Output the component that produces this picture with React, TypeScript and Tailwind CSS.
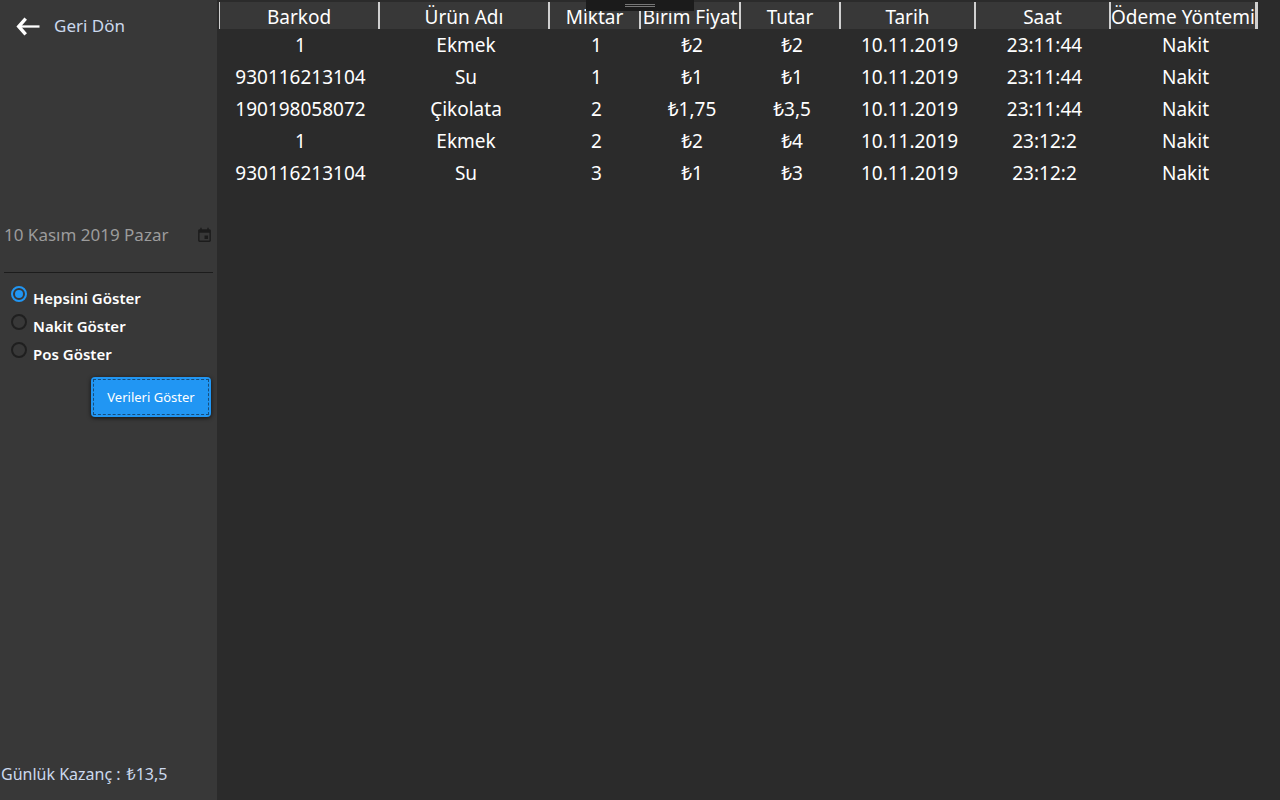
import { useState } from "react";

const columns = [
  { title: "Barkod", cls: "w-[161px] border-l" },
  { title: "Ürün Adı", cls: "w-[170px]" },
  { title: "Miktar", cls: "w-[91px]" },
  { title: "Birim Fiyat", cls: "w-[100px]" },
  { title: "Tutar", cls: "w-[100px]" },
  { title: "Tarih", cls: "w-[135px]" },
  { title: "Saat", cls: "w-[135px]" },
  { title: "Ödeme Yöntemi", cls: "w-[147px] border-r-3" },
];

const rows = [
  ["1", "Ekmek", "1", "₺2", "₺2", "10.11.2019", "23:11:44", "Nakit"],
  ["930116213104", "Su", "1", "₺1", "₺1", "10.11.2019", "23:11:44", "Nakit"],
  ["190198058072", "Çikolata", "2", "₺1,75", "₺3,5", "10.11.2019", "23:11:44", "Nakit"],
  ["1", "Ekmek", "2", "₺2", "₺4", "10.11.2019", "23:12:2", "Nakit"],
  ["930116213104", "Su", "3", "₺1", "₺3", "10.11.2019", "23:12:2", "Nakit"],
];

const filters = ["Hepsini Göster", "Nakit Göster", "Pos Göster"];

function BackIcon() {
  return (
    <svg width="24" height="20" viewBox="0 0 24 20" fill="none" stroke="#fff" aria-hidden="true">
      <path d="M3 10.500H23.500" strokeWidth="2.3" />
      <path d="M9.700 2.700L2.700 10.500l7 7.800" strokeWidth="3.4" />
    </svg>
  );
}

function CalendarIcon() {
  return (
    <svg width="17" height="17" viewBox="0 0 24 24" fill="#1c1c1c" aria-hidden="true">
      <path d="M17 12h-5v5h5v-5zM16 1v2H8V1H6v2H5c-1.110 0-1.990.9-1.990 2L3 19c0 1.100.89 2 2 2h14c1.100 0 2-.9 2-2V5c0-1.100-.9-2-2-2h-1V1h-2zm3 18H5V8h14v11z" />
    </svg>
  );
}

function Sidebar() {
  const [selected, setSelected] = useState(filters[0]);
  return (
    <aside className="flex w-[217px] shrink-0 flex-col bg-[#383838]">
      <button type="button" className="flex h-13 items-center gap-3.5 pl-4 text-[17px] text-[#ccd9ee]">
        <BackIcon />
        Geri Dön
      </button>

      <div className="mx-1 mt-[162px] flex h-[59px] items-start justify-between border-b border-[#1c1c1c] pt-[9px]">
        <input
          type="text"
          readOnly
          aria-label="Tarih"
          defaultValue="10 Kasım 2019 Pazar"
          className="h-6 w-44 bg-transparent text-[17px] text-[#9c9c9c] outline-none"
        />
        <button type="button" aria-label="Takvimi aç" className="flex h-6 items-center">
          <CalendarIcon />
        </button>
      </div>

      <fieldset className="mt-[11px] flex flex-col pl-[11px]">
        {filters.map((name) => (
          <label key={name} className="flex h-7 gap-1.5 text-[15px] leading-7 font-semibold text-white">
            <input
              type="radio"
              name="filter"
              checked={selected === name}
              onChange={() => setSelected(name)}
              className="mt-0.5 flex size-4 appearance-none items-center justify-center rounded-full border-2 border-[#1f1f1f] before:size-2 before:rounded-full checked:border-[#2196f3] checked:before:bg-[#2196f3]"
            />
            {name}
          </label>
        ))}
      </fieldset>

      <button
        type="button"
        className="mt-[9px] mr-1.5 flex h-10 w-30 self-end rounded-sm bg-[#2196f3] p-0.5 text-[13px] text-white shadow-[0_1px_4px_rgba(0,0,0,0.7)]"
      >
        <span className="flex h-full w-full items-center justify-center border border-dashed border-[#174d7a] pt-0.5">
          Verileri Göster
        </span>
      </button>

      <p className="mt-auto flex gap-1.5 pb-3.5 pl-px text-[16px] leading-6 text-[#ccd9ee]">
        <span>Günlük Kazanç :</span>
        <span>₺13,5</span>
      </p>
    </aside>
  );
}

export default function App() {
  return (
    <div className="relative flex min-h-screen bg-[#2b2b2b] font-['Noto_Sans','Open_Sans',sans-serif]">
      <Sidebar />
      <main className="min-w-0 grow overflow-x-auto pt-0.5 pl-0.5">
        <table className="w-[1039px] table-fixed border-separate border-spacing-0 text-center text-[19px] text-white">
          <thead>
            <tr>
              {columns.map((c) => (
                <th
                  key={c.title}
                  scope="col"
                  className={`h-[27px] border-r-2 border-[#d0d0d0] bg-[#383838] p-0 pt-0.5 leading-6 font-normal whitespace-nowrap ${c.cls}`}
                >
                  {c.title}
                </th>
              ))}
            </tr>
          </thead>
          <tbody>
            {rows.map((row, i) => (
              <tr key={i}>
                {row.map((cell, j) => (
                  <td key={j} className="h-8 p-0 pl-0.5 leading-8">
                    {cell}
                  </td>
                ))}
              </tr>
            ))}
          </tbody>
        </table>
      </main>
      <div className="absolute top-0 left-1/2 flex h-[11px] w-27 -translate-x-1/2 justify-center bg-[#1b1b1b] pt-1">
        <div className="h-[3px] w-[30px] border-y border-[#777777]" />
      </div>
    </div>
  );
}
